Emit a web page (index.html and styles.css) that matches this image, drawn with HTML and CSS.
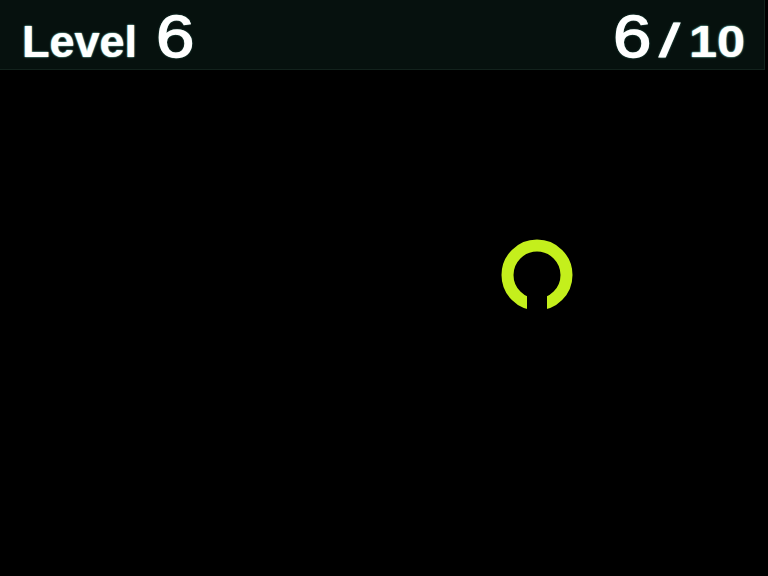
FILE: index.html
```html
<!DOCTYPE html>
<html>
<head>
<meta charset="utf-8">
<link rel="stylesheet" href="styles.css">
</head>
<body>
<div class="screen">
  <header class="hud">
    <div class="level"><span class="label">Level</span><span class="big big-left">6</span></div>
    <div class="score"><span class="big big-right">6</span><span class="slash">/</span><span class="label total">10</span></div>
  </header>
  <main class="field">
    <svg class="ring" width="80" height="80" viewBox="-40 -40 80 80">
      <circle cx="0" cy="0" r="29.5" fill="none" stroke="#c4ef1c" stroke-width="12"/>
      <rect x="-10" y="20" width="20" height="20" fill="#000"/>
    </svg>
  </main>
</div>
</body>
</html>
```
FILE: styles.css
```css
html, body {
  margin: 0;
  padding: 0;
  background: #000;
}
.screen {
  width: 768px;
  height: 576px;
  display: flex;
  flex-direction: column;
  overflow: hidden;
}
.hud {
  height: 70px;
  width: 765px;
  box-sizing: border-box;
  background: #06110e;
  border-bottom: 1px solid #12221c;
  border-right: 1px solid #12221c;
  display: flex;
  justify-content: space-between;
  align-items: flex-start;
  padding: 2px 19px 0 22px;
  font-family: "Liberation Sans", Arial, sans-serif;
  color: #fff;
  text-shadow: 0 0 2px #7fd6c0, 0 0 1px #bff;
}
.level, .score {
  display: flex;
  align-items: baseline;
  line-height: 1.15;
}
.label {
  font-size: 45px;
  font-weight: bold;
}
.total {
  display: inline-block;
  transform: scaleX(1.12);
  transform-origin: right center;
}
.big {
  display: inline-block;
  font-size: 60px;
  font-weight: normal;
  -webkit-text-stroke: 1.4px #fff;
  transform: scaleX(1.15);
}
.big-left {
  transform-origin: left center;
  margin-left: 19px;
}
.big-right {
  transform-origin: right center;
}
.slash {
  display: inline-block;
  font-size: 46px;
  font-weight: normal;
  -webkit-text-stroke: 1px #fff;
  transform: scaleX(1.6);
  margin: 0 19px 0 12px;
}
.field {
  flex: 1;
  position: relative;
  background: #000;
}
.ring {
  position: absolute;
  left: 497px;
  top: 165px;
}
```
